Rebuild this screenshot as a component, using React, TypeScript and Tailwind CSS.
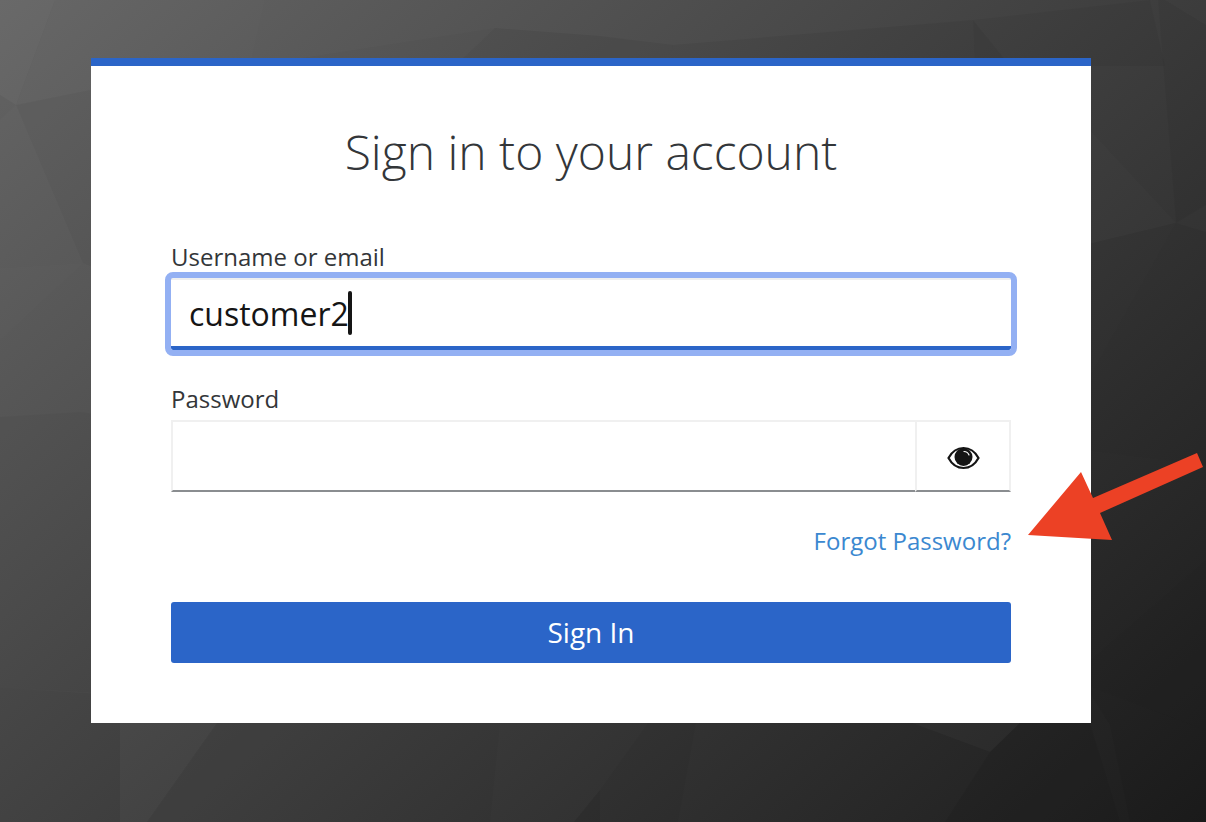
const facets: { points: string; fill: string; opacity: number }[] = [
  { points: '0,0 55,0 16,105 0,95', fill: '#fff', opacity: 0.02 },
  { points: '55,0 265,0 250,66 91,90 16,105', fill: '#fff', opacity: 0.008 },
  { points: '16,105 91,90 100,270 83,263', fill: '#000', opacity: 0.03 },
  { points: '0,95 16,105 0,120', fill: '#000', opacity: 0.02 },
  { points: '0,268 83,263 0,340', fill: '#fff', opacity: 0.008 },
  { points: '0,417 81,412 100,415 100,693 0,688', fill: '#000', opacity: 0.035 },
  { points: '0,688 120,695 120,822 0,822', fill: '#000', opacity: 0.05 },
  { points: '250,66 495,28 455,66', fill: '#000', opacity: 0.02 },
  { points: '495,28 600,36 600,66 455,66', fill: '#000', opacity: 0.06 },
  { points: '600,36 673,45 668,66 600,66', fill: '#000', opacity: 0.05 },
  { points: '673,45 973,20 975,66 668,66', fill: '#000', opacity: 0.05 },
  { points: '973,20 1150,0 1165,66 1010,66', fill: '#000', opacity: 0.04 },
  { points: '973,20 1010,66 975,66', fill: '#000', opacity: 0.09 },
  { points: '1158,0 1206,0 1206,205 1176,223', fill: '#000', opacity: 0.04 },
  { points: '1165,0 1206,0 1206,25', fill: '#fff', opacity: 0.02 },
  { points: '1085,125 1176,223 1085,245', fill: '#fff', opacity: 0.01 },
  { points: '1085,245 1176,223 1085,385', fill: '#000', opacity: 0.03 },
  { points: '1176,223 1206,232 1206,465 1085,450 1085,385', fill: '#000', opacity: 0.05 },
  { points: '1085,450 1206,465 1206,560 1085,665', fill: '#000', opacity: 0.04 },
  { points: '1085,665 1206,560 1206,730 1085,685', fill: '#000', opacity: 0.06 },
  { points: '1085,685 1206,730 1206,822 1130,822 1110,725', fill: '#000', opacity: 0.05 },
  { points: '120,723 217,723 147,822 120,822', fill: '#fff', opacity: 0.01 },
  { points: '147,822 217,723 217,822', fill: '#000', opacity: 0.03 },
  { points: '217,723 500,723 490,822 217,822', fill: '#000', opacity: 0.03 },
  { points: '500,723 696,723 678,822 574,822 600,790 648,723', fill: '#000', opacity: 0.03 },
  { points: '574,822 600,790 600,822', fill: '#000', opacity: 0.05 },
  { points: '912,723 1020,723 990,752', fill: '#fff', opacity: 0.025 },
  { points: '1020,723 1090,723 1120,822 945,822 990,752', fill: '#000', opacity: 0.06 },
];

const PolyBackground = () => (
  <svg className="absolute inset-0 w-full h-full" viewBox="0 0 1206 822" preserveAspectRatio="none">
    <defs>
      <linearGradient id="bg" gradientUnits="userSpaceOnUse" x1="0" y1="0" x2="945" y2="1059">
        <stop offset="0" stopColor="#666666" />
        <stop offset="1" stopColor="#1c1c1c" />
      </linearGradient>
    </defs>
    <rect width="1206" height="822" fill="url(#bg)" />
    {facets.map((f) => (
      <polygon key={f.points} points={f.points} fill={f.fill} fillOpacity={f.opacity} />
    ))}
  </svg>
);

const EyeIcon = () => (
  <svg width="33" height="24" viewBox="0 0 33 24" className="block">
    <path d="M1.5 12C5 5.500 10.500 2 16.500 2S28 5.500 31.500 12C28 18.500 22.500 22 16.500 22S5 18.500 1.500 12Z" fill="none" stroke="#151515" strokeWidth="2.200" />
    <circle cx="16.500" cy="11" r="9" fill="#151515" />
    <path d="M17 5.500A5.500 5.500 0 0 1 22 9" stroke="#fff" strokeWidth="1.200" fill="none" strokeLinecap="round" />
  </svg>
);

const Arrow = () => (
  <svg className="absolute inset-0 w-full h-full pointer-events-none" viewBox="0 0 1206 822">
    <polygon points="1197,453 1203,467 1100,513 1112,540 1028,535 1081,472 1093,498" fill="#ec4125" />
  </svg>
);

export default function App() {
  return (
    <div className="relative w-full h-screen overflow-hidden font-['Open_Sans',sans-serif]">
      <PolyBackground />
      <div className="relative pt-[58px] pl-[91px]">
        <div className="w-[1000px] h-[665px] bg-white border-t-[8px] border-[#2b65c8] px-[80px]">
          <h1 className="pt-[56px] h-[149px] text-center text-[48px] leading-[60px] font-light text-[#333639]">
            Sign in to your account
          </h1>

          <label className="block h-[57px] pt-[26px] text-[24px] leading-[32px] text-[#333639]">Username or email</label>
          <div className="mt-[6px] h-[72px] w-[840px] pl-[18px] pt-[2px] flex items-center bg-white border-t-2 border-[#efefef] border-b-[4px] border-b-[#2b65c8] rounded-[2px] outline-[6px] outline-[#93b0f3] text-[32px] text-[#151515] leading-none">
            <span className="relative">
              customer2
              <span className="absolute right-[-3px] top-[-7px] h-[44px] w-[4px] rounded-sm bg-[#151515]" />
            </span>
          </div>

          <label className="block mt-[33px] h-[37px] text-[24px] leading-[32px] text-[#333639]">Password</label>
          <div className="flex h-[72px]">
            <div className="flex-1 border-2 border-r-0 border-[#f0f0f0] border-b-[#8a8d90]" />
            <div className="w-[96px] pt-[4px] flex items-center justify-center border-2 border-[#f0f0f0] border-b-[#8a8d90]">
              <EyeIcon />
            </div>
          </div>

          <div className="mt-[33px] h-[32px] text-right text-[24px] leading-[32px] text-[#3b88d0]">Forgot Password?</div>

          <button className="mt-[45px] pb-[2px] w-full h-[61px] rounded-[3px] bg-[#2b65c8] text-white text-[28px] leading-none">
            Sign In
          </button>
        </div>
      </div>
      <Arrow />
    </div>
  );
}
